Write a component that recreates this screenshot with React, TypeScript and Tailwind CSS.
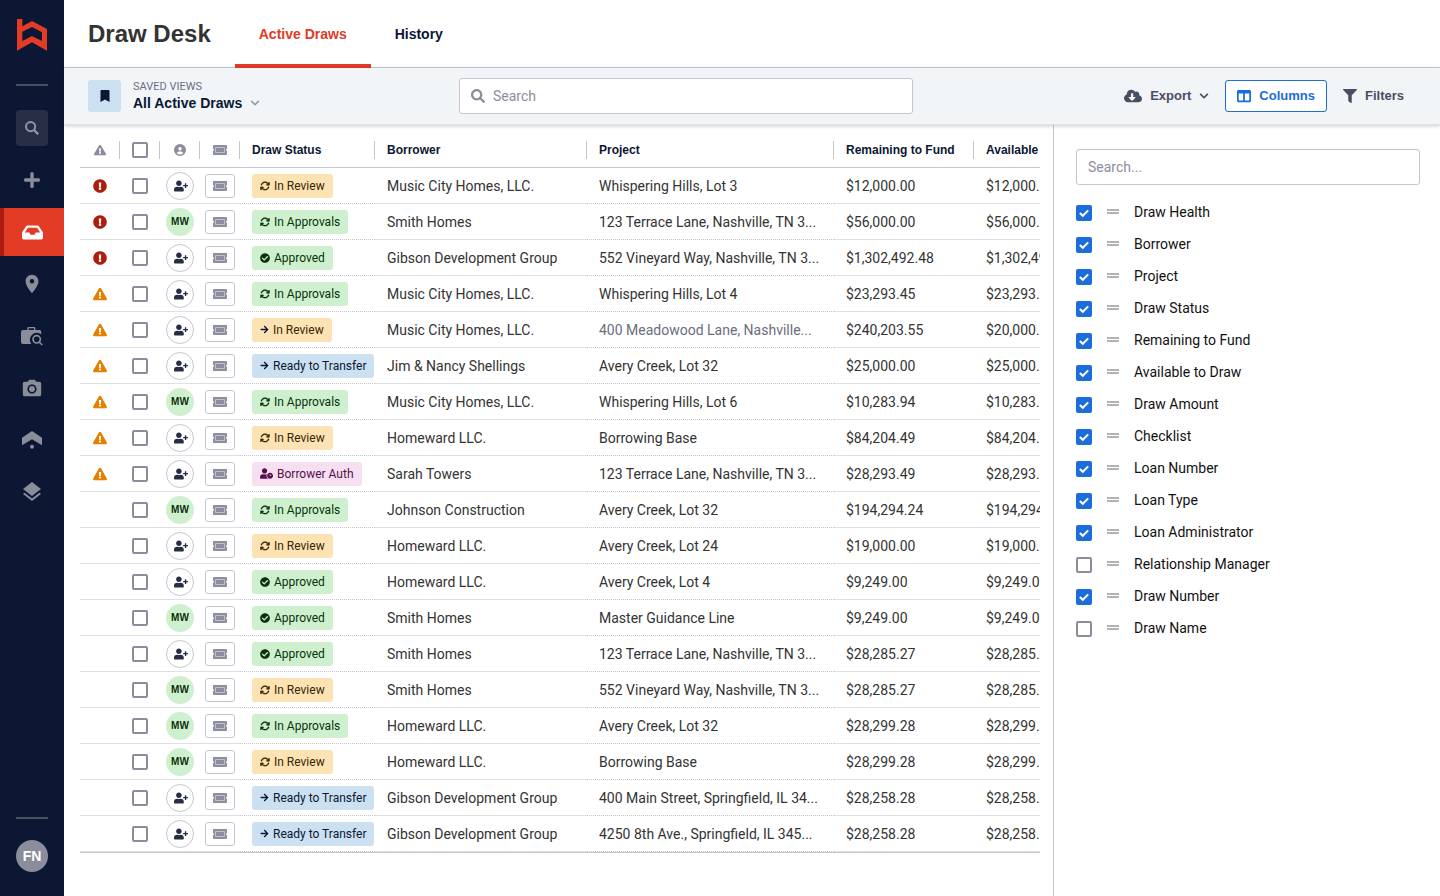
import { useState } from 'react';
import type { ReactNode } from 'react';
import {
  FaArrowRight,
  FaBookmark,
  FaCheckCircle,
  FaChevronDown,
  FaCloudDownloadAlt,
  FaColumns,
  FaExclamationCircle,
  FaExclamationTriangle,
  FaFilter,
  FaInbox,
  FaPlus,
  FaSearch,
  FaUserClock,
  FaUserPlus,
} from 'react-icons/fa';
import { FaArrowsRotate, FaCircleUser } from 'react-icons/fa6';
import { MdCameraAlt, MdLayers, MdLocationOn } from 'react-icons/md';

type Health = 'error' | 'warning' | null;
type StatusKey = 'review' | 'reviewNext' | 'approvals' | 'approved' | 'transfer' | 'auth';

interface Draw {
  health: Health;
  assignee: string | null;
  status: StatusKey;
  borrower: string;
  project: string;
  remaining: string;
  available: string;
  muted?: boolean;
}

const syncIcon = <FaArrowsRotate size={10} stroke="currentColor" strokeWidth={8} />;

const statuses: Record<StatusKey, { label: string; className: string; icon: ReactNode }> = {
  review: { label: 'In Review', className: 'bg-[#fde3b4] text-[#382602]', icon: syncIcon },
  reviewNext: {
    label: 'In Review',
    className: 'bg-[#fde3b4] text-[#382602]',
    icon: <FaArrowRight size={9} className="text-[#0b1733]" />,
  },
  approvals: { label: 'In Approvals', className: 'bg-[#cff0cf] text-[#0b300c]', icon: syncIcon },
  approved: { label: 'Approved', className: 'bg-[#cff0cf] text-[#0b300c]', icon: <FaCheckCircle size={10} /> },
  transfer: { label: 'Ready to Transfer', className: 'bg-[#cbe0f1] text-[#0b1733]', icon: <FaArrowRight size={9} /> },
  auth: { label: 'Borrower Auth', className: 'bg-[#f6dff1] text-[#55104a]', icon: <FaUserClock size={13} /> },
};

const draws: Draw[] = [
  { health: 'error', assignee: null, status: 'review', borrower: 'Music City Homes, LLC.', project: 'Whispering Hills, Lot 3', remaining: '$12,000.00', available: '$12,000.00' },
  { health: 'error', assignee: 'MW', status: 'approvals', borrower: 'Smith Homes', project: '123 Terrace Lane, Nashville, TN 3...', remaining: '$56,000.00', available: '$56,000.00' },
  { health: 'error', assignee: null, status: 'approved', borrower: 'Gibson Development Group', project: '552 Vineyard Way, Nashville, TN 3...', remaining: '$1,302,492.48', available: '$1,302,492.48' },
  { health: 'warning', assignee: null, status: 'approvals', borrower: 'Music City Homes, LLC.', project: 'Whispering Hills, Lot 4', remaining: '$23,293.45', available: '$23,293.45' },
  { health: 'warning', assignee: null, status: 'reviewNext', borrower: 'Music City Homes, LLC.', project: '400 Meadowood Lane, Nashville...', remaining: '$240,203.55', available: '$20,000.00', muted: true },
  { health: 'warning', assignee: null, status: 'transfer', borrower: 'Jim & Nancy Shellings', project: 'Avery Creek, Lot 32', remaining: '$25,000.00', available: '$25,000.00' },
  { health: 'warning', assignee: 'MW', status: 'approvals', borrower: 'Music City Homes, LLC.', project: 'Whispering Hills, Lot 6', remaining: '$10,283.94', available: '$10,283.94' },
  { health: 'warning', assignee: null, status: 'review', borrower: 'Homeward LLC.', project: 'Borrowing Base', remaining: '$84,204.49', available: '$84,204.49' },
  { health: 'warning', assignee: null, status: 'auth', borrower: 'Sarah Towers', project: '123 Terrace Lane, Nashville, TN 3...', remaining: '$28,293.49', available: '$28,293.49' },
  { health: null, assignee: 'MW', status: 'approvals', borrower: 'Johnson Construction', project: 'Avery Creek, Lot 32', remaining: '$194,294.24', available: '$194,294.24' },
  { health: null, assignee: null, status: 'review', borrower: 'Homeward LLC.', project: 'Avery Creek, Lot 24', remaining: '$19,000.00', available: '$19,000.00' },
  { health: null, assignee: null, status: 'approved', borrower: 'Homeward LLC.', project: 'Avery Creek, Lot 4', remaining: '$9,249.00', available: '$9,249.00' },
  { health: null, assignee: 'MW', status: 'approved', borrower: 'Smith Homes', project: 'Master Guidance Line', remaining: '$9,249.00', available: '$9,249.00' },
  { health: null, assignee: null, status: 'approved', borrower: 'Smith Homes', project: '123 Terrace Lane, Nashville, TN 3...', remaining: '$28,285.27', available: '$28,285.27' },
  { health: null, assignee: 'MW', status: 'review', borrower: 'Smith Homes', project: '552 Vineyard Way, Nashville, TN 3...', remaining: '$28,285.27', available: '$28,285.27' },
  { health: null, assignee: 'MW', status: 'approvals', borrower: 'Homeward LLC.', project: 'Avery Creek, Lot 32', remaining: '$28,299.28', available: '$28,299.28' },
  { health: null, assignee: 'MW', status: 'review', borrower: 'Homeward LLC.', project: 'Borrowing Base', remaining: '$28,299.28', available: '$28,299.28' },
  { health: null, assignee: null, status: 'transfer', borrower: 'Gibson Development Group', project: '400 Main Street, Springfield, IL 34...', remaining: '$28,258.28', available: '$28,258.28' },
  { health: null, assignee: null, status: 'transfer', borrower: 'Gibson Development Group', project: '4250 8th Ave., Springfield, IL 345...', remaining: '$28,258.28', available: '$28,258.28' },
];

const columnOptions = [
  { name: 'Draw Health', on: true },
  { name: 'Borrower', on: true },
  { name: 'Project', on: true },
  { name: 'Draw Status', on: true },
  { name: 'Remaining to Fund', on: true },
  { name: 'Available to Draw', on: true },
  { name: 'Draw Amount', on: true },
  { name: 'Checklist', on: true },
  { name: 'Loan Number', on: true },
  { name: 'Loan Type', on: true },
  { name: 'Loan Administrator', on: true },
  { name: 'Relationship Manager', on: false },
  { name: 'Draw Number', on: true },
  { name: 'Draw Name', on: false },
];

const heading = "font-['Liberation_Sans',sans-serif] font-bold";

function Logo() {
  return (
    <svg width="30" height="32" viewBox="0 0 90 96" fill="#e23b26" aria-hidden="true">
      <path
        fillRule="evenodd"
        d="M0 0H16V22L45 6L90 30V95L45 70L0 95ZM16 38V66L45 51L75 66V40L45 24Z"
      />
    </svg>
  );
}

function BriefcaseSearch() {
  return (
    <svg width="22" height="19" viewBox="0 0 66 57" fill="currentColor" aria-hidden="true">
      <path d="M19 9V3Q19 0 22 0H40Q43 0 43 3V9H55Q61 9 61 15V22A21 21 0 0 0 31 51H6Q0 51 0 45V15Q0 9 6 9ZM23 9H39V4H23Z" />
      <circle cx="47" cy="37" r="11" fill="none" stroke="currentColor" strokeWidth="5" />
      <path d="M54 45L64 54" stroke="currentColor" strokeWidth="5" />
    </svg>
  );
}

function RoofDot() {
  return (
    <svg width="20" height="18" viewBox="0 0 60 54" fill="currentColor" aria-hidden="true">
      <path d="M30 0L60 20V43L30 25L0 43V20Z" />
      <circle cx="30" cy="47" r="6" />
    </svg>
  );
}

function Ticket() {
  return (
    <svg width="14" height="10" viewBox="0 0 42 30" aria-hidden="true">
      <path
        fill="#8b8d9e"
        d="M3 0H39Q42 0 42 3V12A3 3 0 0 0 42 18V27Q42 30 39 30H3Q0 30 0 27V18A3 3 0 0 0 0 12V3Q0 0 3 0Z"
      />
      <rect x="6" y="6" width="30" height="18" rx="2" fill="#bfc0ca" />
      <rect x="9" y="9" width="24" height="12" fill="#8b8d9e" />
    </svg>
  );
}

function Checkbox({ label, defaultChecked = false, id }: { label?: string; defaultChecked?: boolean; id?: string }) {
  return (
    <span className="inline-grid size-4 shrink-0 place-items-center align-middle">
      <input
        id={id}
        type="checkbox"
        aria-label={label}
        defaultChecked={defaultChecked}
        className="peer col-start-1 row-start-1 size-4 appearance-none rounded-xs border-2 border-[#8b8d9e] bg-white checked:border-[#1a6ddb] checked:bg-[#1a6ddb]"
      />
      <svg
        viewBox="0 0 16 16"
        className="pointer-events-none col-start-1 row-start-1 hidden size-4 peer-checked:block"
        fill="none"
        stroke="white"
        strokeWidth="2"
      >
        <path d="M3.8 8L6.8 10.8L12.2 5.4" />
      </svg>
    </span>
  );
}

const navItems = [
  { name: 'New', icon: <FaPlus size={18} /> },
  { name: 'Draw Desk', icon: <FaInbox size={21} />, active: true },
  { name: 'Locations', icon: <MdLocationOn size={22} /> },
  { name: 'Inspections', icon: <BriefcaseSearch /> },
  { name: 'Photos', icon: <MdCameraAlt size={22} className="mt-0.5" /> },
  { name: 'Projects', icon: <RoofDot /> },
  { name: 'Layers', icon: <MdLayers size={24} /> },
];

function Sidebar() {
  return (
    <nav className="flex w-16 shrink-0 flex-col items-center bg-[#0b1733] pt-[19px] pb-6">
      <a href="#home" aria-label="Home">
        <Logo />
      </a>
      <hr className="mt-[33px] w-8 border-t-2 border-[#494e62]" />
      <div className="mt-[18px] flex w-full flex-col items-center gap-1">
        <div className="flex h-12 items-center">
          <button
            aria-label="Search"
            className="flex h-9 w-8 items-center justify-center rounded-sm bg-[#272e46] text-[#9294a2]"
          >
            <svg width="14" height="14" viewBox="0 0 14 14" fill="none" stroke="currentColor" strokeWidth="2">
              <circle cx="5.6" cy="5.6" r="4.6" />
              <path d="M9 9L13.2 13.2" strokeWidth="2.4" />
            </svg>
          </button>
        </div>
        {navItems.map((item) => (
          <a
            key={item.name}
            href={`#${item.name}`}
            aria-label={item.name}
            className={
              item.active
                ? 'flex h-12 w-full items-center justify-center border-l-4 border-[#ad1c0c] bg-[#e23b26] pr-1 text-white'
                : 'flex h-12 w-full items-center justify-center text-[#8b8d9b]'
            }
          >
            {item.icon}
          </a>
        ))}
      </div>
      <hr className="mt-auto mb-[21px] w-8 border-t-2 border-[#494e62]" />
      <button className={`${heading} size-8 rounded-full bg-[#8b8d9b] text-sm text-white`}>FN</button>
    </nav>
  );
}

function Toolbar() {
  return (
    <div className="z-10 flex h-[57px] shrink-0 items-center border-b border-[#dfe2e6] bg-[#f1f5f8] px-6 shadow-[0_1px_4px_rgba(0,0,0,0.2)]">
      <div className="flex w-[371px] items-center gap-3">
        <button
          aria-label="Saved views"
          className="flex h-8 w-[33px] items-center justify-center rounded-[3px] bg-[#cbe0f1] text-[#0b1733]"
        >
          <FaBookmark size={12} />
        </button>
        <button className="pb-[3px] text-left">
          <span className="block text-[11px] leading-4 text-[#6b6d7f]">SAVED VIEWS</span>
          <span className={`${heading} flex items-center gap-2 text-sm leading-4 text-[#0b1733]`}>
            All Active Draws
            <FaChevronDown size={10} className="text-[#9a9ba8]" />
          </span>
        </button>
      </div>
      <label className="flex h-9 max-w-[454px] flex-1 items-center gap-2 rounded-[3px] border border-[#c5c6d0] bg-white px-[11px]">
        <FaSearch size={14} className="shrink-0 text-[#8b8d9e]" />
        <input
          aria-label="Search draws"
          placeholder="Search"
          className="w-full text-sm outline-none placeholder:text-[#8b8d9e]"
        />
      </label>
      <div className={`${heading} ml-auto flex items-center gap-1 text-[13px] text-[#4b4d63]`}>
        <button className="flex h-8 items-center gap-2 px-3">
          <FaCloudDownloadAlt size={18} />
          Export
          <FaChevronDown size={10} />
        </button>
        <button className="flex h-8 items-center gap-2 rounded-[3px] border border-[#1a6ddb] bg-white px-[11px] text-[#1a6ddb]">
          <FaColumns size={14} />
          Columns
        </button>
        <button className="flex h-8 items-center gap-2 px-3">
          <FaFilter size={14} />
          Filters
        </button>
      </div>
    </div>
  );
}

function HeaderCell({ children }: { children: ReactNode }) {
  return (
    <th className="h-9 border-b border-[#c5c6d0] p-0 font-bold">
      <div className="flex h-[18px] items-center border-r border-[#c5c6d0] pl-3 whitespace-nowrap">{children}</div>
    </th>
  );
}

function IconHeader({ children, label }: { children: ReactNode; label: string }) {
  return (
    <th aria-label={label} className="h-9 border-b border-[#c5c6d0] p-0">
      <div className="flex h-[18px] items-center justify-center border-r border-[#c5c6d0] text-[#8b8d9e]">
        {children}
      </div>
    </th>
  );
}

function DrawRow({ draw }: { draw: Draw }) {
  const status = statuses[draw.status];
  return (
    <tr className="h-9 *:border-b *:border-[#dfe0e4] *:p-0">
      <td>
        <span className="flex justify-center">
          {draw.health === 'error' && <FaExclamationCircle size={14} className="text-[#b01b0c]" />}
          {draw.health === 'warning' && <FaExclamationTriangle size={14} className="text-[#e57f00]" />}
        </span>
      </td>
      <td className="text-center leading-none">
        <Checkbox label={`Select ${draw.borrower}`} />
      </td>
      <td>
        {draw.assignee ? (
          <button
            className={`${heading} mx-auto flex size-7 items-center justify-center rounded-full bg-[#cff0cf] text-[10px] leading-3 text-[#0b300c]`}
          >
            {draw.assignee}
          </button>
        ) : (
          <button
            aria-label="Assign"
            className="mx-auto flex size-7 items-center justify-center rounded-full border border-[#c5c6d0] pl-0.5 text-[#262d45]"
          >
            <FaUserPlus size={14} />
          </button>
        )}
      </td>
      <td>
        <button
          aria-label="Checklist"
          className="mx-auto flex h-6 w-[30px] items-center justify-center rounded-[3px] border border-[#c5c6d0]"
        >
          <Ticket />
        </button>
      </td>
      <td className="border-dotted border-[#c5c6d0]!">
        <span
          className={`ml-3 inline-flex h-6 items-center gap-1 rounded-[3px] px-2 align-middle text-xs whitespace-nowrap ${status.className}`}
        >
          {status.icon}
          {status.label}
        </span>
      </td>
      <td className="whitespace-nowrap">
        <span className="pl-3">{draw.borrower}</span>
      </td>
      <td className={`border-dotted border-[#c5c6d0]! whitespace-nowrap ${draw.muted ? 'text-[#6b6d7f]' : ''}`}>
        <span className="pl-3">{draw.project}</span>
      </td>
      <td>
        <span className="pl-3">{draw.remaining}</span>
      </td>
      <td>
        <span className="pl-3">{draw.available}</span>
      </td>
    </tr>
  );
}

function DrawTable() {
  return (
    <section className="min-w-0 flex-1 pt-[7px] pr-[13px] pl-4">
      <div className="overflow-x-auto [scrollbar-width:none]">
        <table className="w-[1034px] table-fixed border-separate border-spacing-0 border-b border-[#c5c6d0] text-sm text-[#333]">
          <colgroup>
            <col className="w-10" />
            <col className="w-10" />
            <col className="w-10" />
            <col className="w-10" />
            <col className="w-[135px]" />
            <col className="w-[212px]" />
            <col className="w-[247px]" />
            <col className="w-[140px]" />
            <col />
          </colgroup>
          <thead className={`${heading} text-xs text-[#0b1733]`}>
            <tr>
              <IconHeader label="Health">
                <FaExclamationTriangle size={12} />
              </IconHeader>
              <IconHeader label="Select">
                <Checkbox label="Select all draws" />
              </IconHeader>
              <IconHeader label="Assignee">
                <FaCircleUser size={12} />
              </IconHeader>
              <IconHeader label="Checklist">
                <Ticket />
              </IconHeader>
              <HeaderCell>Draw Status</HeaderCell>
              <HeaderCell>Borrower</HeaderCell>
              <HeaderCell>Project</HeaderCell>
              <HeaderCell>Remaining to Fund</HeaderCell>
              <HeaderCell>Available to Draw</HeaderCell>
            </tr>
          </thead>
          <tbody>
            {draws.map((draw, i) => (
              <DrawRow key={i} draw={draw} />
            ))}
          </tbody>
        </table>
      </div>
    </section>
  );
}

function ColumnsPanel() {
  return (
    <aside className="w-[387px] shrink-0 border-l border-[#c5c6d0] pt-6 pr-5 pl-[22px]">
      <input
        aria-label="Search columns"
        placeholder="Search..."
        className="h-9 w-full rounded-[3px] border border-[#c5c6d0] px-[11px] text-sm outline-none placeholder:text-[#8b8d9e]"
      />
      <ul className="mt-3">
        {columnOptions.map((option) => (
          <li key={option.name} className="flex h-8 items-center text-sm text-[#111]">
            <Checkbox id={option.name} defaultChecked={option.on} />
            <span className="mx-[15px] mb-[3px] h-[5px] w-3 border-y-2 border-[#b3b3b3]" />
            <label htmlFor={option.name} className="pb-0.5">
              {option.name}
            </label>
          </li>
        ))}
      </ul>
    </aside>
  );
}

export default function App() {
  const [tab, setTab] = useState('Active Draws');

  return (
    <div className="flex min-h-screen bg-white font-['Roboto',sans-serif]">
      <Sidebar />
      <div className="flex min-w-0 flex-1 flex-col">
        <header className={`${heading} flex h-[68px] shrink-0 border-b border-[#c5cad3] pl-6`}>
          <h1 className="mr-6 flex items-center text-2xl text-[#333]">Draw Desk</h1>
          {['Active Draws', 'History'].map((name) => (
            <button
              key={name}
              onClick={() => setTab(name)}
              className={
                tab === name
                  ? '-mb-px border-b-4 border-[#e23b26] px-6 pt-1 text-sm text-[#e23b26]'
                  : '-mb-px border-b-4 border-transparent px-6 pt-1 text-sm text-[#0b1733]'
              }
            >
              {name}
            </button>
          ))}
        </header>
        <Toolbar />
        <main className="flex flex-1">
          <DrawTable />
          <ColumnsPanel />
        </main>
      </div>
    </div>
  );
}
